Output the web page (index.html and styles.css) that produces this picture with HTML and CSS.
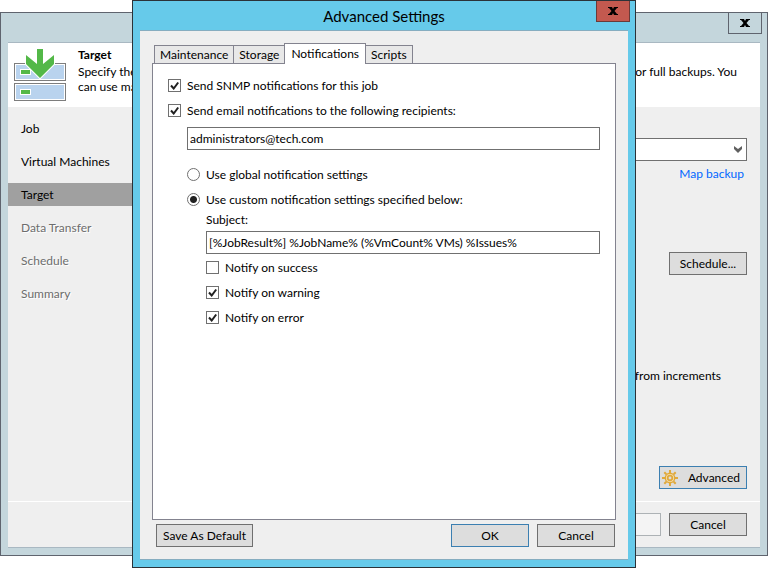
FILE: index.html
```html
<!DOCTYPE html>
<html lang="en">
<head>
    <meta charset="UTF-8">
    <title>Advanced Settings</title>
    <link rel="stylesheet" href="styles.css">
</head>
<body>
    <div class="desktop">
        <!-- Backup job wizard -->
        <div class="window wizard">
            <div class="titlebar">
                <button type="button" class="close" aria-label="Close wizard">
                    <svg width="10" height="8" viewBox="0 0 10 8"><path d="M0 0h4l1 2 1-2h4v1H9L6.500 4 9 7h1v1H6L5 6 4 8H0V7h1l2.500-3L1 1H0z"/></svg>
                </button>
            </div>
            <div class="wizard-main">
                <div class="wizard-header">
                    <svg class="target-icon" width="52" height="54" viewBox="0 0 52 54">
                        <rect x=".5" y="16.500" width="51" height="17" fill="#fff" stroke="#7d7d7d"/>
                        <rect x="2" y="18" width="48" height="14" fill="#b9d3ee"/>
                        <rect x=".5" y="36.500" width="51" height="17" fill="#fff" stroke="#7d7d7d"/>
                        <rect x="2" y="38" width="48" height="14" fill="#b9d3ee"/>
                        <rect x="6.500" y="22.500" width="10" height="5" fill="#53b848" stroke="#fff"/>
                        <rect x="6.500" y="42.500" width="10" height="5" fill="#53b848" stroke="#fff"/>
                        <path d="M23 2h6v15l11-9v9L26 31 12 17V8l11 9z" fill="#53b848" stroke="#fff" stroke-width="2" paint-order="stroke"/>
                    </svg>
                    <div class="wizard-info">
                        <strong>Target</strong>
                        <div class="info-line"><span>Specify the</span><span>for full backups. You</span></div>
                        <div class="info-line">can use map</div>
                    </div>
                </div>
                <div class="wizard-body">
                    <ul class="steps">
                        <li>Job</li>
                        <li>Virtual Machines</li>
                        <li class="current">Target</li>
                        <li class="next">Data Transfer</li>
                        <li class="next">Schedule</li>
                        <li class="next">Summary</li>
                    </ul>
                    <div class="step-content">
                        <select class="repository" aria-label="Backup repository"><option></option></select>
                        <a href="#" class="map-link">Map backup</a>
                        <button type="button" class="btn schedule">Schedule...</button>
                        <p class="increments">from increments</p>
                        <button type="button" class="btn focused advanced">
                            <svg width="16" height="16" viewBox="0 0 16 16" fill="none" stroke="#e0a93b">
                                <path d="M8 0v3M8 13v3M0 8h3M13 8h3M2.300 2.300l2 2M11.700 11.700l2 2M2.300 13.700l2-2M11.700 4.300l2-2" stroke-width="2"/>
                                <circle cx="8" cy="8" r="4.700" fill="#f6dfae" stroke-width="1.400"/>
                                <circle cx="8" cy="8" r="2.300" fill="#ddd" stroke-width="1.700"/>
                            </svg>
                            <span>Advanced</span>
                        </button>
                    </div>
                </div>
                <div class="wizard-footer">
                    <button type="button" class="btn" disabled aria-label="Finish"></button>
                    <button type="button" class="btn">Cancel</button>
                </div>
            </div>
        </div>

        <!-- Advanced settings dialog -->
        <div class="window dialog" role="dialog" aria-labelledby="dialog-title">
            <div class="titlebar">
                <h1 id="dialog-title">Advanced Settings</h1>
                <button type="button" class="close" aria-label="Close dialog">
                    <svg width="10" height="8" viewBox="0 0 10 8"><path d="M0 0h4l1 2 1-2h4v1H9L6.500 4 9 7h1v1H6L5 6 4 8H0V7h1l2.500-3L1 1H0z"/></svg>
                </button>
            </div>
            <form class="dialog-main">
                <div class="tabs" role="tablist">
                    <button type="button" class="tab" role="tab">Maintenance</button>
                    <button type="button" class="tab" role="tab">Storage</button>
                    <button type="button" class="tab active" role="tab" aria-selected="true">Notifications</button>
                    <button type="button" class="tab" role="tab">Scripts</button>
                </div>
                <div class="panel" role="tabpanel">
                    <label class="option"><input type="checkbox" checked>Send SNMP notifications for this job</label>
                    <label class="option"><input type="checkbox" checked>Send email notifications to the following recipients:</label>
                    <div class="group recipients">
                        <input type="text" class="field" aria-label="Recipients" value="administrators@tech.com">
                        <div class="mode">
                            <label class="option"><input type="radio" name="mode">Use global notification settings</label>
                            <label class="option"><input type="radio" name="mode" checked>Use custom notification settings specified below:</label>
                        </div>
                        <div class="group">
                            <label class="caption" for="subject">Subject:</label>
                            <input type="text" class="field" id="subject" value="[%JobResult%] %JobName% (%VmCount% VMs) %Issues%">
                            <div class="notify">
                                <label class="option"><input type="checkbox">Notify on success</label>
                                <label class="option"><input type="checkbox" checked>Notify on warning</label>
                                <label class="option"><input type="checkbox" checked>Notify on error</label>
                            </div>
                        </div>
                    </div>
                </div>
                <div class="dialog-footer">
                    <button type="button" class="btn save">Save As Default</button>
                    <button type="button" class="btn focused">OK</button>
                    <button type="button" class="btn">Cancel</button>
                </div>
            </form>
        </div>
    </div>
</body>
</html>
```

FILE: styles.css
```css
* {
    box-sizing: border-box;
}

body {
    margin: 0;
    background-color: #fff;
    color: #000;
    font-family: Lato, "Open Sans", sans-serif;
    font-size: 12px;
    line-height: 16px;
}

button, input, select {
    font: inherit;
    color: inherit;
    border-radius: 0;
}

.desktop {
    position: relative;
    display: flex;
    min-height: 100vh;
    padding: 12px 0;
}

.window {
    display: flex;
    flex-direction: column;
    padding: 0 7px 7px;
    border: 1px solid #5f646e;
}

.titlebar {
    display: flex;
    align-items: flex-start;
    height: 29px;
}

.close {
    display: flex;
    align-items: center;
    justify-content: center;
    width: 34px;
    height: 21px;
    margin: 0 -2px 0 auto;
    padding: 0;
    border: 1px solid #5f646e;
    border-top: none;
    background: none;
}

/* wizard */

.wizard {
    flex: 1;
    background-color: #c4d6dc;
}

.wizard-main {
    flex: 1;
    display: flex;
    flex-direction: column;
    border-top: 1px solid #a9b8c2;
    border-bottom: 1px solid #a9b8c2;
    background-color: #efefef;
}

.wizard-header {
    display: flex;
    gap: 12px;
    height: 64px;
    padding: 4px 23px 0 6px;
    background-color: #fff;
}

.wizard-info {
    flex: 1;
}

.wizard-info strong {
    display: block;
    margin-bottom: 1px;
}

.info-line {
    display: flex;
    justify-content: space-between;
    line-height: 15px;
}

.wizard-body {
    flex: 1;
    display: flex;
}

.steps {
    display: flex;
    flex-direction: column;
    gap: 10px;
    width: 160px;
    margin: 0;
    padding: 10px 0 0;
    list-style: none;
}

.steps li {
    padding-left: 13px;
    line-height: 23px;
}

.steps .current {
    background-color: #a0a0a0;
}

.steps .next {
    color: #6d6d6d;
    text-shadow: 1px 1px #fff;
}

.step-content {
    flex: 1;
    display: flex;
    flex-direction: column;
    align-items: flex-end;
    padding: 31px 13px 12px;
}

.repository {
    width: 100%;
    height: 23px;
    border: 1px solid #707070;
    appearance: none;
    background: #fff url("data:image/svg+xml,%3Csvg xmlns='http://www.w3.org/2000/svg' width='8' height='7'%3E%3Cpath d='M0 0l4 3 4-3v3L4 7 0 3z' fill='%23606060'/%3E%3C/svg%3E") no-repeat right 4px center;
}

.map-link {
    margin: 5px 3px 0 0;
    color: #0066ff;
    text-decoration: none;
}

.btn {
    min-width: 78px;
    height: 23px;
    padding: 0 6px;
    border: 1px solid #707070;
    background-color: #ddd;
    line-height: 21px;
}

.btn.focused {
    border-color: #3c7fb1;
}

.btn:disabled {
    border-color: #adb2b5;
    background-color: #f4f4f4;
}

.schedule {
    margin-top: 70px;
}

.increments {
    margin: 93px 26px 0 0;
}

.advanced {
    display: flex;
    align-items: center;
    justify-content: space-between;
    width: 88px;
    margin-top: auto;
    padding: 0 6px 0 2px;
}

.wizard-footer {
    display: flex;
    justify-content: flex-end;
    gap: 8px;
    padding: 11px 13px;
    border-top: 1px solid #fff;
}

/* dialog */

.dialog {
    position: absolute;
    inset: 0 132px;
    border-color: #2b3238;
    background-color: #66caea;
}

.dialog h1 {
    flex: 1;
    margin: 0 -32px 0 0;
    font-size: 15px;
    font-weight: normal;
    line-height: 30px;
    text-align: center;
}

.dialog .close {
    background-color: #c3594f;
    border-color: #6b3a38;
}

.dialog-main {
    flex: 1;
    display: flex;
    flex-direction: column;
    padding: 12px;
    border-top: 1px solid #86adc0;
    border-bottom: 1px solid #86adc0;
    background-color: #efefef;
}

.tabs {
    display: flex;
    align-items: flex-end;
    height: 20px;
    padding-left: 2px;
}

.tab {
    height: 18px;
    margin-right: -1px;
    padding: 0 5px;
    border: 1px solid #83838f;
    border-bottom: none;
    background-color: #e8e8e8;
    line-height: 18px;
}

.tab.active {
    z-index: 1;
    height: 21px;
    margin-bottom: -1px;
    padding: 0 6px;
    background-color: #fff;
}

.panel {
    flex: 1;
    padding: 9px 15px;
    border: 1px solid #83838f;
    background-color: #fff;
}

.option {
    display: flex;
    align-items: center;
    gap: 6px;
    height: 25px;
}

.option input {
    flex: none;
    width: 13px;
    height: 13px;
    margin: 0;
    border: 1px solid #707070;
    appearance: none;
    background: #fff no-repeat center;
}

.option input[type="checkbox"]:checked {
    background-image: url("data:image/svg+xml,%3Csvg xmlns='http://www.w3.org/2000/svg' width='9' height='9'%3E%3Cpath d='M1 4.500l2.700 3L8.200 1.500' fill='none' stroke='%23212121' stroke-width='2'/%3E%3C/svg%3E");
}

.option input[type="radio"] {
    border-radius: 50%;
}

.option input[type="radio"]:checked {
    background-image: radial-gradient(circle, #212121 3px, transparent 4px);
}

.group {
    padding-left: 19px;
}

.recipients {
    padding-top: 4px;
}

.field {
    display: block;
    width: 100%;
    height: 23px;
    padding: 0 2px;
    border: 1px solid #707070;
    background-color: #fff;
}

.mode {
    margin-top: 12px;
}

.caption {
    display: block;
    margin-bottom: 3px;
}

.notify {
    margin-top: 1px;
}

.dialog-footer {
    display: flex;
    gap: 8px;
    padding: 4px 1px 0 4px;
}

.save {
    margin-right: auto;
}
```
